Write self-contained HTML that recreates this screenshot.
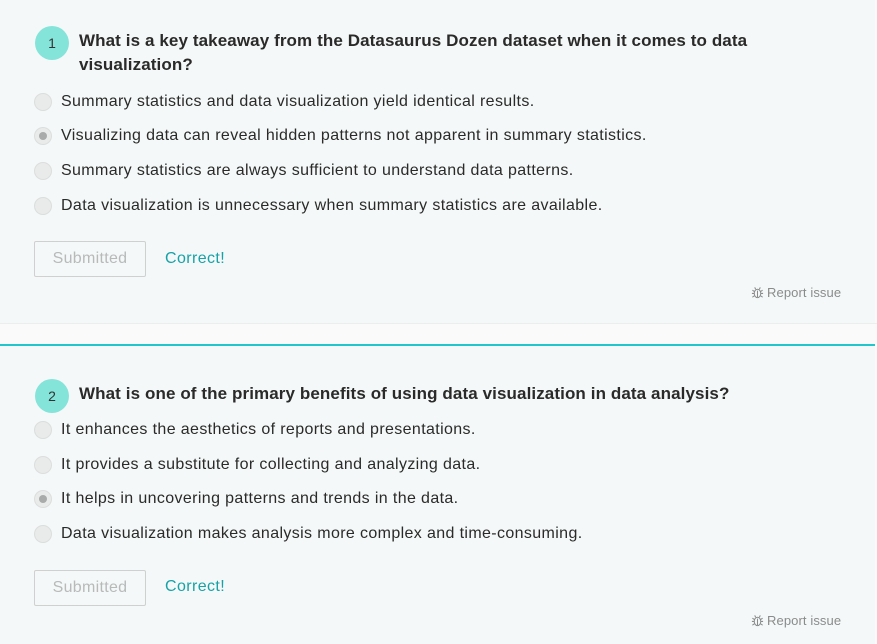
<!DOCTYPE html>
<html><head><meta charset="utf-8"><style>
*{margin:0;padding:0;box-sizing:border-box}
body{width:877px;height:644px;background:#fafafa;font-family:"Liberation Sans",Arial,sans-serif;color:#222;position:relative;overflow:hidden}
.card{position:absolute;left:0;width:875px;background:#f5f8f8}
.ab{position:absolute;white-space:nowrap}
.num{position:absolute;width:34px;height:34px;border-radius:50%;background:#84e4da;font-size:14px;text-align:center;line-height:34px;color:#333}
.q{position:absolute;left:79px;font-weight:bold;font-size:17px;line-height:24px;color:#2a2a2a;letter-spacing:0.1px}
.r{position:absolute;left:34px;width:18px;height:18px;border-radius:50%;background:#e9eaea;border:1px solid #dcdede}
.r.s::after{content:"";position:absolute;left:4px;top:4px;width:8px;height:8px;border-radius:50%;background:#a9abab}
.o{position:absolute;left:61px;font-size:16px;color:#2a2a2a;white-space:nowrap;letter-spacing:0.37px}
.btn{position:absolute;left:34px;width:112px;height:36px;border:1px solid #cfd1d1;border-radius:2px;color:#b8baba;font-size:16px;text-align:center;line-height:34px;letter-spacing:0.3px}
.ok{position:absolute;left:165px;font-size:16px;color:#17a2a8;letter-spacing:0.4px}
.rep{position:absolute;left:751px;font-size:13px;color:#8a8c8c;white-space:nowrap;letter-spacing:0.1px}
</style></head><body>
<div class="card" style="top:0;height:323px"></div>
<div class="ab" style="left:0;top:323px;width:877px;height:1px;background:#eceeee"></div>
<div class="ab" style="left:0;top:344px;width:875px;height:2px;background:#20c6cc"></div>
<div class="card" style="top:346px;height:298px"></div>

<div class="num" style="left:35px;top:26px">1</div>
<div class="q" style="top:29px">What is a key takeaway from the Datasaurus Dozen dataset when it comes to data<br>visualization?</div>
<div class="r" style="top:93px"></div><div class="o" style="top:93px">Summary statistics and data visualization yield identical results.</div>
<div class="r s" style="top:127px"></div><div class="o" style="top:127px">Visualizing data can reveal hidden patterns not apparent in summary statistics.</div>
<div class="r" style="top:162px"></div><div class="o" style="top:162px">Summary statistics are always sufficient to understand data patterns.</div>
<div class="r" style="top:197px"></div><div class="o" style="top:197px">Data visualization is unnecessary when summary statistics are available.</div>
<div class="btn" style="top:241px">Submitted</div>
<div class="ok" style="top:250px">Correct!</div>
<div class="rep" style="top:285px"><svg width="13" height="13" viewBox="0 0 14 14" style="vertical-align:-2px;margin-right:3px" fill="none" stroke="#8a8c8c" stroke-width="1.1"><ellipse cx="7" cy="8" rx="3.5" ry="4.5"/><path d="M5 3.5l-1-2M9 3.5l1-2M1 8h2.5M10.5 8H13M1.5 4.5l2.2 1.5M12.5 4.5l-2.2 1.5M1.5 12l2.2-1.5M12.5 12l-2.2-1.5M7 5v7"/></svg>Report issue</div>

<div class="num" style="left:35px;top:379px">2</div>
<div class="q" style="top:382px">What is one of the primary benefits of using data visualization in data analysis?</div>
<div class="r" style="top:421px"></div><div class="o" style="top:421px">It enhances the aesthetics of reports and presentations.</div>
<div class="r" style="top:456px"></div><div class="o" style="top:456px">It provides a substitute for collecting and analyzing data.</div>
<div class="r s" style="top:490px"></div><div class="o" style="top:490px">It helps in uncovering patterns and trends in the data.</div>
<div class="r" style="top:525px"></div><div class="o" style="top:525px">Data visualization makes analysis more complex and time-consuming.</div>
<div class="btn" style="top:570px">Submitted</div>
<div class="ok" style="top:578px">Correct!</div>
<div class="rep" style="top:613px"><svg width="13" height="13" viewBox="0 0 14 14" style="vertical-align:-2px;margin-right:3px" fill="none" stroke="#8a8c8c" stroke-width="1.1"><ellipse cx="7" cy="8" rx="3.5" ry="4.5"/><path d="M5 3.5l-1-2M9 3.5l1-2M1 8h2.5M10.5 8H13M1.5 4.5l2.2 1.5M12.5 4.5l-2.2 1.5M1.5 12l2.2-1.5M12.5 12l-2.2-1.5M7 5v7"/></svg>Report issue</div>
</body></html>
